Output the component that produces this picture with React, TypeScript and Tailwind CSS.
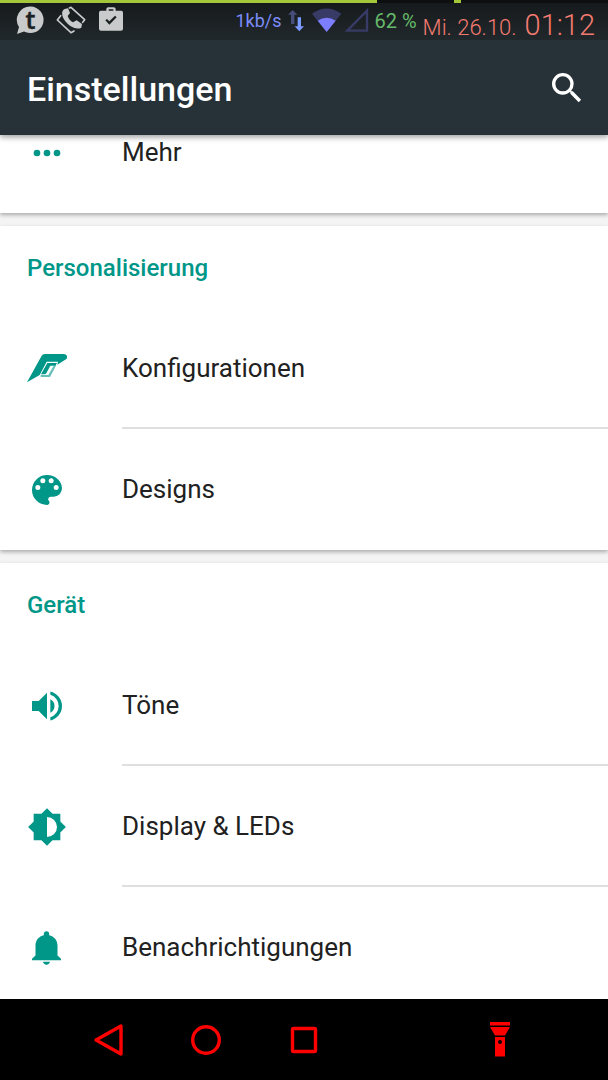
import type { ReactNode } from "react";

function Svg({ className, box = "0 0 24 24", children }: { className: string; box?: string; children: ReactNode }) {
  return (
    <svg viewBox={box} className={className} fill="currentColor" aria-hidden="true">
      {children}
    </svg>
  );
}

const rowIcon = "size-10 shrink-0 text-[#009688]";

const MoreIcon = () => (
  <Svg className={rowIcon}>
    <path d="M6 10a2 2 0 1 0 0 4 2 2 0 0 0 0-4zm12 0a2 2 0 1 0 0 4 2 2 0 0 0 0-4zm-6 0a2 2 0 1 0 0 4 2 2 0 0 0 0-4z" />
  </Svg>
);

const ConfigIcon = () => (
  <Svg className={rowIcon} box="0 0 120 120">
    <path d="M0 100 L44 20 Q47 15 53 15 H110 Q120 15 121 25 Q121 28 117 31 L91 47 L93 38 H59 L38 78 Z" />
    <path d="M42 76 L61 42 H90 L85 50 H70 L57 74 L52 76 Z" />
    <path opacity=".6" d="M41 78 H64 L79 52 L88 48 L69 84 H41 Z" />
  </Svg>
);

const PaletteIcon = () => (
  <Svg className={rowIcon}>
    <path d="M12 3a9 9 0 0 0 0 18c.83 0 1.500-.67 1.500-1.500 0-.39-.15-.74-.39-1.010-.23-.26-.38-.61-.38-.99 0-.83.67-1.500 1.500-1.500H16a5 5 0 0 0 5-5c0-4.420-4.030-8-9-8zm-5.500 9a1.500 1.500 0 1 1 0-3 1.500 1.500 0 0 1 0 3zm3-4a1.500 1.500 0 1 1 0-3 1.500 1.500 0 0 1 0 3zm5 0a1.500 1.500 0 1 1 0-3 1.500 1.500 0 0 1 0 3zm3 4a1.500 1.500 0 1 1 0-3 1.500 1.500 0 0 1 0 3z" />
  </Svg>
);

const SoundIcon = () => (
  <Svg className={rowIcon}>
    <path d="M3 9v6h4l5 5V4L7 9H3zm13.500 3A4.500 4.500 0 0 0 14 7.970v8.050A4.480 4.480 0 0 0 16.500 12zM14 3.230v2.060a7 7 0 0 1 0 13.420v2.060a9 9 0 0 0 0-17.540z" />
  </Svg>
);

const BrightnessIcon = () => (
  <Svg className={rowIcon}>
    <path d="M20 15.310L23.310 12 20 8.690V4h-4.690L12 .69 8.690 4H4v4.690L.69 12 4 15.310V20h4.690L12 23.310 15.310 20H20v-4.690zM12 18V6a6 6 0 0 1 0 12z" />
  </Svg>
);

const BellIcon = () => (
  <Svg className={rowIcon}>
    <path d="M9.600 20.300h4.200c-.2 1.100-1 1.700-2.100 1.700s-1.900-.6-2.100-1.700zM18.300 16.500V10.500c0-3.200-2-5.500-5-6.200V3.500a1.600 1.600 0 0 0-3.200 0v.8c-3 .7-5 3-5 6.200v6L3 18.400v.9h17.400v-.9l-2.100-1.900z" />
  </Svg>
);

function Row({ icon, label, divider }: { icon: ReactNode; label: string; divider?: boolean }) {
  return (
    <li>
      <a href="#" className="flex h-[121px] items-stretch pl-[27px] text-[26px] text-[#212121]">
        <span className="flex w-[95px] items-center">{icon}</span>
        <span
          className={
            divider
              ? "flex flex-1 items-center border-b-2 border-[#dfdfdf] pt-0.5"
              : "flex flex-1 items-center"
          }
        >
          {label}
        </span>
      </a>
    </li>
  );
}

function Section({ title, children }: { title?: string; children: ReactNode }) {
  return (
    <section className="bg-white shadow-[0_2px_4px_rgba(0,0,0,0.3)]">
      {title && (
        <h2 className="flex h-[82px] items-center pl-[27px] pt-0.5 text-[24px] font-medium text-[#009688]">{title}</h2>
      )}
      <ul>{children}</ul>
    </section>
  );
}

function StatusBar() {
  return (
    <div className="bg-linear-to-b from-[#15191b] to-[#21282b] text-[#c8cacb]">
      <div className="flex h-[3px] bg-black/40">
        <span className="w-[62%] bg-[#a4c639]" />
        <span className="ml-[77px] w-[7px] bg-[#a4c639]" />
      </div>
      <div className="flex h-[37px] items-start pl-4 pr-[13px]">
        <div className="flex flex-1 gap-3 pt-[3px]">
          <Svg className="h-7 w-7 overflow-visible" box="0 0 28 28">
            <path d="M14.500 0.500a13.300 13.300 0 1 1-6.500 25L1 28l2-7A13.300 13.300 0 0 1 14.500 .5z" />
            <text
              x="14.500"
              y="22.500"
              textAnchor="middle"
              fill="#1b2022"
              stroke="#1b2022"
              strokeWidth="0.500"
              fontSize="25"
              fontWeight="600"
              fontFamily="Open Sans, sans-serif"
            >
              t
            </text>
          </Svg>
          <Svg className="h-7 w-[30px]" box="0 0 90 84">
            <g fill="none" stroke="currentColor" strokeWidth="5" strokeLinejoin="round" strokeLinecap="round">
              <path d="M40 6 L45 4 L86 41 L80 49" />
              <path d="M14 29 L4 42 L45 80 L54 75" />
            </g>
            <path d="M26 9 C15 14 16 30 28 46 C42 64 62 72 76 65 L78 54 L62 43 L51 49 C43 45 38 38 35 30 L42 21 L36 7 Z" />
          </Svg>
          <Svg className="h-7 w-[26px]" box="0 0 78 84">
            <path
              fillRule="evenodd"
              d="M25 14 V9 Q25 4 31 4 H47 Q53 4 53 9 V14 H70 Q75 14 75 20 V68 Q75 74 69 74 H9 Q3 74 3 68 V20 Q3 14 8 14 Z M32 14 H46 V10 H32 Z M22 43 L34 56 L56 34 L51 29 L34 46 L27 39 Z"
            />
          </Svg>
        </div>
        <div className="flex items-start whitespace-nowrap">
          <span className="pt-1 text-[18px] leading-7 text-[#7c8cf8]">1kb/s</span>
          <Svg className="ml-1.5 mt-[7px] h-[22px] w-4" box="0 0 48 66">
            <path fill="#474e79" d="M14 0 L28 14 H19 V42 H9 V14 H0 Z" />
            <path fill="#7c9bff" d="M29 22 H39 V49 H48 L34 64 L20 49 H29 Z" />
          </Svg>
          <Svg className="ml-2 mt-[5px] h-6 w-[30px]" box="0 0 90 72">
            <path fill="#373b66" d="M0 17 Q44 -14 88 17 L44 72 Z" />
            <path fill="#7c7dff" d="M17 38 Q44 20 71 38 L44 72 Z" />
          </Svg>
          <Svg className="ml-0.5 mt-[5px] h-6 w-[25px]" box="0 0 75 72">
            <path d="M10 68 L69 8 V68 Z" fill="none" stroke="#373b66" strokeWidth="7" />
          </Svg>
          <span className="ml-1.5 pt-1 text-[20px] leading-7 text-[#66b96a]">62 %</span>
          <span className="ml-1.5 flex items-baseline gap-2 font-light leading-9 text-[#f47b70]">
            <span className="text-[22px]">Mi. 26.10.</span>
            <span className="text-[29px] leading-[44px]">01:12</span>
          </span>
        </div>
      </div>
    </div>
  );
}

function NavBar() {
  return (
    <nav className="grid h-[81px] shrink-0 grid-cols-5 bg-black px-[60px] text-[#ff0000]">
      <button aria-label="Zurück" className="grid place-items-center">
        <Svg className="size-9" box="0 0 36 36">
          <path d="M5 18 L30 4 V32 Z" fill="none" stroke="currentColor" strokeWidth="3.400" strokeLinejoin="round" />
        </Svg>
      </button>
      <button aria-label="Startbildschirm" className="grid place-items-center">
        <Svg className="size-9" box="0 0 36 36">
          <circle cx="18" cy="18" r="13.300" fill="none" stroke="currentColor" strokeWidth="3.400" />
        </Svg>
      </button>
      <button aria-label="Übersicht" className="grid place-items-center">
        <Svg className="size-9" box="0 0 36 36">
          <rect x="6.500" y="6.500" width="23" height="23" rx="1" fill="none" stroke="currentColor" strokeWidth="3.400" />
        </Svg>
      </button>
      <button aria-label="Taschenlampe" className="col-start-5 grid place-items-center">
        <Svg className="size-9" box="0 0 36 36">
          <path d="M9 0h20v3.500H9zM9 5h20l-5 8.500H14z" />
          <path fillRule="evenodd" d="M14 15h10v19.500H14zM19 18a2 2 0 1 0 0 4 2 2 0 0 0 0-4z" />
        </Svg>
      </button>
    </nav>
  );
}

export default function App() {
  return (
    <div className="flex h-screen flex-col overflow-hidden bg-[#f4f4f4] font-['Roboto',sans-serif]">
      <header className="z-10 shrink-0 bg-[#263238] shadow-[0_2px_6px_rgba(0,0,0,0.4)]">
        <StatusBar />
        <div className="flex h-[95px] items-center justify-between pl-[27px] pr-[21px] text-white">
          <h1 className="pt-1 text-[34px] font-medium">Einstellungen</h1>
          <button aria-label="Suchen">
            <Svg className="size-10">
              <path d="M15.500 14h-.79l-.28-.27A6.470 6.470 0 0 0 16 9.500 6.500 6.500 0 1 0 9.500 16c1.610 0 3.090-.59 4.230-1.570l.27.28v.79l5 4.990L20.490 19l-4.990-5zm-6 0a4.500 4.500 0 1 1 0-9 4.500 4.500 0 0 1 0 9z" />
            </Svg>
          </button>
        </div>
      </header>
      <main className="flex min-h-0 flex-1 flex-col overflow-hidden">
        <div className="-mt-[43px] flex flex-col gap-[13px]">
          <Section>
            <Row icon={<MoreIcon />} label="Mehr" />
          </Section>
          <Section title="Personalisierung">
            <Row icon={<ConfigIcon />} label="Konfigurationen" divider />
            <Row icon={<PaletteIcon />} label="Designs" />
          </Section>
          <Section title="Gerät">
            <Row icon={<SoundIcon />} label="Töne" divider />
            <Row icon={<BrightnessIcon />} label="Display & LEDs" divider />
            <Row icon={<BellIcon />} label="Benachrichtigungen" />
          </Section>
        </div>
      </main>
      <NavBar />
    </div>
  );
}
